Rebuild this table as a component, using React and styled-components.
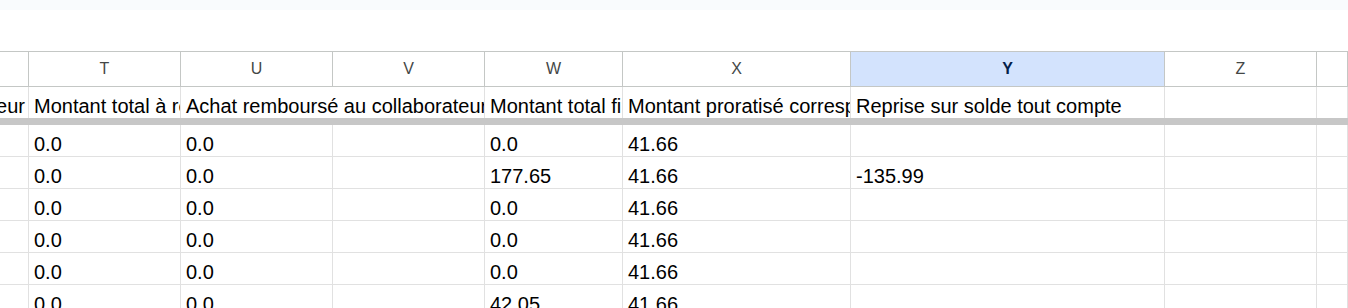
import styled, { createGlobalStyle } from "styled-components";

const GlobalStyle = createGlobalStyle`
  html, body {
    margin: 0;
    overflow: hidden;
    background: #ffffff;
    font-family: "Liberation Sans", Arial, sans-serif;
  }
`;

const columns = [
  { letter: "", width: "29px" },
  { letter: "T", width: "152px" },
  { letter: "U", width: "152px" },
  { letter: "V", width: "152px" },
  { letter: "W", width: "138px" },
  { letter: "X", width: "228px" },
  { letter: "Y", width: "314px", selected: true },
  { letter: "Z", width: "152px" },
  { letter: "", width: "minmax(0, 1fr)" },
];

const titles = [
  { text: "collaborateur", end: true },
  { text: "Montant total à rembourser" },
  { text: "Achat remboursé au collaborateur", span: 2 },
  { text: "Montant total financé" },
  { text: "Montant proratisé correspondant" },
  { text: "Reprise sur solde tout compte" },
  { text: "" },
  { text: "" },
];

const rows = [
  ["", "0.0", "0.0", "", "0.0", "41.66", "", "", ""],
  ["", "0.0", "0.0", "", "177.65", "41.66", "-135.99", "", ""],
  ["", "0.0", "0.0", "", "0.0", "41.66", "", "", ""],
  ["", "0.0", "0.0", "", "0.0", "41.66", "", "", ""],
  ["", "0.0", "0.0", "", "0.0", "41.66", "", "", ""],
  ["", "0.0", "0.0", "", "42.05", "41.66", "", "", ""],
];

export default function App() {
  return (
    <>
      <GlobalStyle />
      <Page>
        <TopStrip />
        <Sheet $template={columns.map((c) => c.width).join(" ")}>
          {columns.map((c, i) => (
            <ColumnHeader key={"h" + i} $selected={c.selected}>
              {c.letter}
            </ColumnHeader>
          ))}

          {titles.map((t, i) => (
            <TitleCell key={"t" + i} $span={t.span} $end={t.end}>
              <span>{t.text}</span>
            </TitleCell>
          ))}

          <FreezeBar />

          {rows.map((row, r) =>
            row.map((value, c) => (
              <Cell key={r + "-" + c}>
                <span>{value}</span>
              </Cell>
            ))
          )}
        </Sheet>
      </Page>
    </>
  );
}

const Page = styled.div`
  width: 100%;
  height: 308px;
  overflow: hidden;
`;

const TopStrip = styled.div`
  height: 10px;
  background: #f9fbfd;
  margin-bottom: 41px;
`;

const Sheet = styled.div`
  display: grid;
  grid-template-columns: ${(props) => props.$template};
  border-top: 1px solid #c4c7c5;
  color: #000000;
`;

const ColumnHeader = styled.div`
  height: 35px;
  box-sizing: border-box;
  border-right: 1px solid #c4c7c5;
  border-bottom: 1px solid #c4c7c5;
  display: flex;
  align-items: center;
  justify-content: center;
  font-size: 16px;
  font-weight: ${(props) => (props.$selected ? 700 : 400)};
  color: ${(props) => (props.$selected ? "#041e49" : "#444746")};
  background: ${(props) => (props.$selected ? "#d3e3fd" : "#ffffff")};
`;

const TitleCell = styled.div`
  grid-column: span ${(props) => props.$span || 1};
  height: 31px;
  box-sizing: border-box;
  border-right: 1px solid #e1e1e1;
  padding: ${(props) => (props.$end ? "0 3px 0 0" : "0 5px")};
  display: flex;
  align-items: flex-end;
  justify-content: ${(props) => (props.$end ? "flex-end" : "flex-start")};
  overflow: hidden;
  white-space: nowrap;
  font-size: 20px;
  line-height: 24px;

  span {
    flex-shrink: 0;
  }
`;

const FreezeBar = styled.div`
  grid-column: 1 / -1;
  height: 7px;
  background: #c7c7c7;
`;

const Cell = styled.div`
  height: 32px;
  box-sizing: border-box;
  border-right: 1px solid #e1e1e1;
  border-bottom: 1px solid #e1e1e1;
  padding: 0 5px;
  display: flex;
  align-items: flex-end;
  overflow: hidden;
  white-space: nowrap;
  font-size: 20px;
  line-height: 24px;
`;
